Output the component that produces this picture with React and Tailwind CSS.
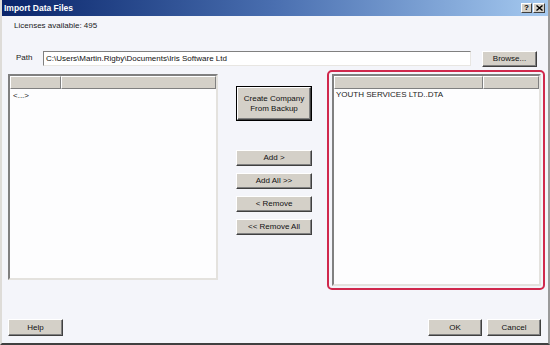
import React from "react";

const font = { fontFamily: '"Liberation Sans", Arial, sans-serif' };

function Btn({ children, className = "" }) {
  return (
    <div
      className={
        "flex items-center justify-center bg-[#d4d0c8] border border-t-white border-l-white border-b-[#404040] border-r-[#404040] shadow-[inset_-1px_-1px_0_#808080] text-[8px] leading-[10px] text-[#111] " +
        className
      }
    >
      {children}
    </div>
  );
}

function HeaderCell({ className = "" }) {
  return (
    <div
      className={
        "h-full bg-[#d4d0c8] border border-t-white border-l-white border-b-[#808080] border-r-[#808080] shadow-[inset_-1px_-1px_0_#d4d0c8] " +
        className
      }
    />
  );
}

function ListBox({ firstCol, className = "", children }) {
  return (
    <div
      className={
        "flex flex-col bg-white border-2 border-t-[#808080] border-l-[#808080] border-b-[#e4e2de] border-r-[#e4e2de] " +
        className
      }
    >
      <div className="flex h-[13px] shrink-0">
        <HeaderCell className={firstCol} />
        <HeaderCell className="flex-1" />
      </div>
      <div className="flex-1 bg-[#fdfdfe]">{children}</div>
    </div>
  );
}

export default function App() {
  return (
    <div
      style={font}
      className="w-[550px] h-[345px] flex flex-col bg-[#f4f5fa] border-l-2 border-l-[#dedcd8] border-r-2 border-r-[#9a9a9a] border-b-2 border-b-[#404040] overflow-hidden"
    >
      {/* Title bar */}
      <div className="h-[16px] shrink-0 flex items-center bg-gradient-to-r from-[#0a246a] via-[#4a6fb0] to-[#a6caf0] pl-[2px] pr-[3px]">
        <span className="text-white font-bold text-[8.5px] leading-[10px] flex-1">
          Import Data Files
        </span>
        <div className="w-[11px] h-[10px] bg-[#d4d0c8] border border-t-white border-l-white border-b-[#404040] border-r-[#404040] flex items-center justify-center text-[8px] font-bold leading-[8px] text-black">
          ?
        </div>
        <div className="ml-[1px] w-[12px] h-[10px] bg-[#d4d0c8] border border-t-white border-l-white border-b-[#404040] border-r-[#404040] flex items-center justify-center">
          <svg width="7" height="6" viewBox="0 0 7 6">
            <path d="M0.5 0.5 L6.5 5.5 M6.5 0.5 L0.5 5.5" stroke="#000" strokeWidth="1.4" />
          </svg>
        </div>
      </div>

      {/* Licenses */}
      <div className="mt-[5px] pl-[12px] h-[10px] text-[8px] leading-[10px] text-[#1a1a1a]">
        Licenses available: 495
      </div>

      {/* Path row */}
      <div className="mt-[20px] h-[16px] flex items-start pl-[14px]">
        <div className="w-[27px] h-[14px] flex items-center text-[8px] leading-[10px] text-[#1a1a1a]">
          Path
        </div>
        <div className="w-[428px] h-[15px] bg-white border border-t-[#808080] border-l-[#808080] border-b-[#e8e6e2] border-r-[#e8e6e2] flex items-center pl-[2px] text-[8px] leading-[10px] text-[#111]">
          C:\Users\Martin.Rigby\Documents\Iris Software Ltd
        </div>
        <Btn className="ml-[11px] w-[55px] h-[16px]">Browse...</Btn>
      </div>

      {/* Main row */}
      <div className="mt-[3px] h-[220px] flex items-start pl-[6px]">
        <ListBox firstCol="w-[51px]" className="mt-[4px] w-[210px] h-[206px]">
          <div className="pl-[3px] pt-[2px] text-[8px] leading-[10px] text-[#222]">
            {"<...>"}
          </div>
        </ListBox>

        <div className="ml-[18px] w-[76px] flex flex-col">
          <div className="mt-[16px] h-[35px] border border-black">
            <Btn className="w-full h-full text-center">
              <span>
                Create Company
                <br />
                From Backup
              </span>
            </Btn>
          </div>
          <Btn className="mt-[29px] h-[16px]">Add &gt;</Btn>
          <Btn className="mt-[7px] h-[16px]">Add All &gt;&gt;</Btn>
          <Btn className="mt-[7px] h-[16px]">&lt; Remove</Btn>
          <Btn className="mt-[7px] h-[16px]">&lt;&lt; Remove All</Btn>
        </div>

        <div className="ml-[15px] w-[218px] h-[220px] border-2 border-[#d0284c] rounded-[5px] pt-[2px] pl-[3px]">
          <ListBox firstCol="w-[149px]" className="w-[209px] h-[212px]">
            <div className="pl-[2px] pt-[1px] text-[8px] leading-[10px] text-[#222]">
              YOUTH SERVICES LTD..DTA
            </div>
          </ListBox>
        </div>
      </div>

      {/* Bottom buttons */}
      <div className="mt-[29px] h-[17px] flex pl-[6px] pr-[7px]">
        <Btn className="w-[55px] h-[17px]">Help</Btn>
        <div className="flex-1" />
        <Btn className="w-[54px] h-[17px]">OK</Btn>
        <Btn className="ml-[5px] w-[54px] h-[17px]">Cancel</Btn>
      </div>
    </div>
  );
}
